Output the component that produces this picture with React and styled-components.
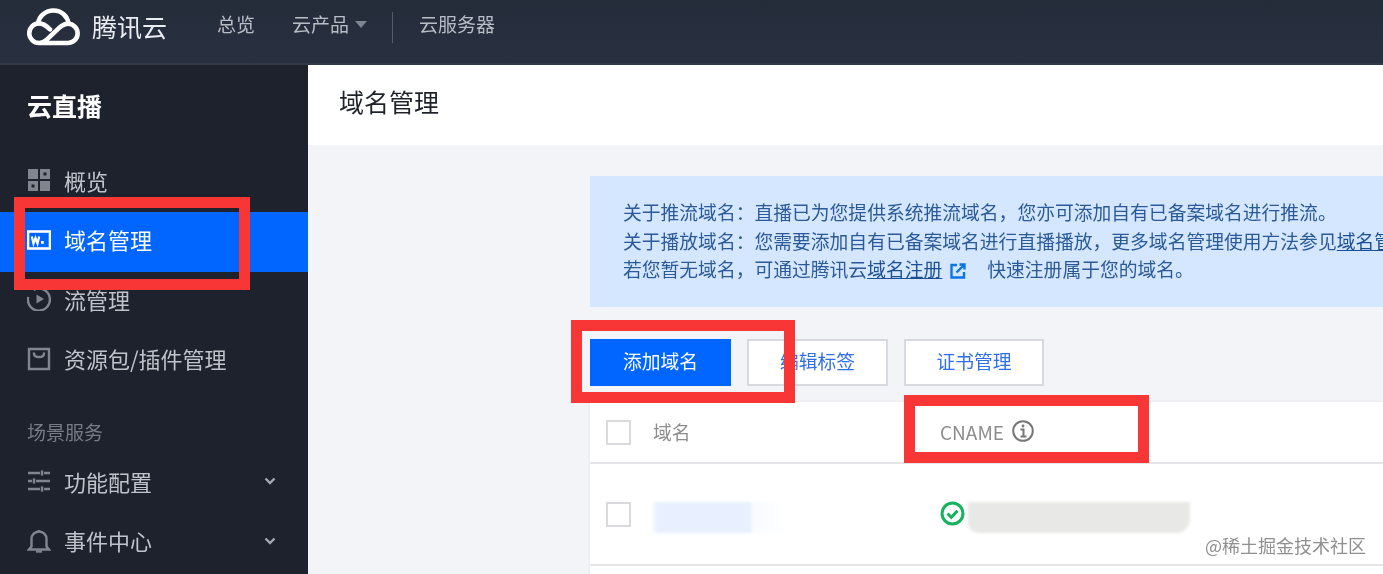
import React from 'react'
import styled, { createGlobalStyle } from 'styled-components'

const GlobalStyle = createGlobalStyle`
  html, body { margin: 0; padding: 0; background: #fff; }
  * { box-sizing: border-box; }
`

const Page = styled.div`
  position: relative;
  width: 1383px;
  height: 574px;
  overflow: hidden;
  display: flex;
  flex-direction: column;
  font-family: "Noto Sans CJK SC", "Noto Sans", sans-serif;
  background: #f2f4f8;
  filter: blur(0.45px);
`

const TopBar = styled.header`
  flex: none;
  height: 65px;
  padding: 0 0 16px 27px;
  display: flex;
  align-items: center;
  background: linear-gradient(#242b39, #293040);
  border-bottom: 2px solid #323947;
`

const Brand = styled.div`
  display: flex;
  align-items: center;
  gap: 12px;
  width: 190px;
  margin-top: 6px;
  color: #e9ecf1;
  font-size: 25px;
  line-height: 1;
`

const NavItem = styled.span`
  display: flex;
  align-items: center;
  gap: 6px;
  margin-right: ${p => p.$gap}px;
  color: #b9bec6;
  font-size: 19px;
`

const Caret = styled.i`
  width: 0;
  height: 0;
  margin-top: 2px;
  border-left: 6px solid transparent;
  border-right: 6px solid transparent;
  border-top: 7px solid #7f8590;
`

const NavDivider = styled.i`
  width: 1px;
  height: 31px;
  margin-top: 7px;
  margin-right: 26px;
  background: #565c69;
`

const Body = styled.div`
  flex: 1;
  display: flex;
  min-height: 0;
`

const Sidebar = styled.aside`
  flex: none;
  width: 308px;
  background: #1e222d;
  color: #bfc3ca;
`

const SideTitle = styled.div`
  height: 87.5px;
  padding: 0 0 7px 27px;
  display: flex;
  align-items: center;
  color: #fff;
  font-size: 25px;
  font-weight: 700;
`

const SideItem = styled.div`
  height: 59.5px;
  padding: 0 32px 4px 27px;
  display: flex;
  align-items: center;
  gap: 13px;
  font-size: 22px;
  background: ${p => (p.$active ? '#0066ff' : 'transparent')};
  color: ${p => (p.$active ? '#fff' : '#bfc3ca')};
  span { flex: 1; margin-bottom: 1px; }
`

const SideGroup = styled.div`
  height: 44.25px;
  margin-top: 18.5px;
  padding-left: 27px;
  display: flex;
  align-items: center;
  color: #767b85;
  font-size: 19px;
`

const Main = styled.main`
  flex: 1;
  min-width: 0;
`

const MainHeader = styled.div`
  height: 80px;
  padding: 0 0 8px 31px;
  display: flex;
  align-items: center;
  background: #fff;
  color: #1f2329;
  font-size: 25px;
`

const Content = styled.div`
  padding: 31px 0 0 282px;
`

const Notice = styled.div`
  height: 131px;
  padding: 22px 0 0 33px;
  background: #d5e7ff;
  color: #2a5a98;
  font-size: 18.8px;
  line-height: 28.5px;
  white-space: nowrap;
  overflow: hidden;
  a { color: #1c4f94; text-decoration: underline; }
  svg { margin: 0 21px 0 8px; vertical-align: -2px; }
`

const Toolbar = styled.div`
  margin-top: 32px;
  display: flex;
  gap: 16px;
`

const Button = styled.button`
  width: ${p => p.$width}px;
  height: 47px;
  padding: 0 0 4px;
  font: inherit;
  font-size: 18.8px;
  border: ${p => (p.$primary ? 'none' : '2px solid #d6d9df')};
  background: ${p => (p.$primary ? '#0066ff' : '#fff')};
  color: ${p => (p.$primary ? '#fff' : '#2f6fe8')};
`

const Table = styled.div`
  margin-top: 16px;
  background: #fff;
  height: 190px;
  box-shadow: 0 0 3px rgba(0, 0, 0, 0.07);
`

const Row = styled.div`
  height: ${p => p.$height}px;
  padding-left: 16px;
  display: flex;
  align-items: center;
  border-bottom: 2px solid #e3e5e9;
`

const Checkbox = styled.i`
  flex: none;
  width: 25px;
  height: 25px;
  border: 2px solid #d8dade;
  background: #fff;
`

const ColName = styled.div`
  width: 287px;
  margin-left: 22px;
  padding-bottom: 2px;
  display: flex;
  align-items: center;
  color: #8d8d8d;
  font-size: 18.8px;
`

const ColCname = styled.div`
  display: flex;
  align-items: center;
  gap: ${p => p.$gap}px;
  padding-bottom: 2px;
  color: #8d8d8d;
  font-size: 19px;
`

const Smudge = styled.i`
  display: block;
  width: ${p => p.$width}px;
  height: 31px;
  margin-top: 8px;
  background: ${p => p.$bg};
  border-radius: ${p => p.$radius || '0'};
  filter: blur(1.5px);
`

const Watermark = styled.div`
  position: absolute;
  right: 17px;
  bottom: 20px;
  color: #8f8f8f;
  font-size: 18px;
  line-height: 1;
`

const Mark = styled.div`
  position: absolute;
  left: ${p => p.$x}px;
  top: ${p => p.$y}px;
  width: ${p => p.$w}px;
  height: ${p => p.$h}px;
  border: 11px solid #f93636;
`

const Logo = () => (
  <svg width="53" height="38" viewBox="0 0 53 38" fill="none" stroke="#fff" strokeWidth="4.6" strokeLinecap="round" strokeLinejoin="round">
    <path d="M12 35h29a9.6 9.6 0 0 0 0-19.2c-5 0-8 3-12 7l-9.500 9C17.500 34 15 35 12 35a9.800 9.800 0 0 1 0-19.600c5 0 8.500 3.600 11 6" />
    <path d="M11 15.500C12 8 18.500 2.500 26.500 2.500S40.500 8 41.500 15.500" />
  </svg>
)

const iconProps = { width: 24, height: 24, viewBox: '0 0 24 24', fill: 'none', style: { flex: 'none' } }

const OverviewIcon = () => (
  <svg {...iconProps} fill="#80858e">
    <path fillRule="evenodd" d="M1 1h10v10H1zM13 1h10v10H13zM16.500 4.500v3h3v-3zM1 13h10v10H1zM4.500 16.500v3h3v-3zM13 13h10v10H13z" />
  </svg>
)

const DomainIcon = () => (
  <svg {...iconProps}>
    <rect x="1" y="3.500" width="22" height="17" stroke="#fff" strokeWidth="2.600" />
    <path d="M4.800 8.500l1.700 7 2-5.500 2 5.500 1.700-7" stroke="#fff" strokeWidth="2.200" />
    <rect x="14" y="13" width="2.800" height="2.800" fill="#fff" />
  </svg>
)

const StreamIcon = () => (
  <svg {...iconProps} stroke="#80858e">
    <path d="M6.500 3A11 11 0 1 1 1.200 10" strokeWidth="2.400" />
    <path d="M9.500 7.500l7.500 4.500-7.500 4.500z" fill="#80858e" strokeWidth="0" />
  </svg>
)

const PackageIcon = () => (
  <svg {...iconProps} stroke="#80858e" strokeWidth="2.400">
    <path d="M2 2h20v20H2z" />
    <path d="M7 5.500v1c0 2.500 2 3.500 5 3.500s5-1 5-3.500v-1" />
  </svg>
)

const ConfigIcon = () => (
  <svg {...iconProps} stroke="#80858e" strokeWidth="2.400">
    <path d="M1 4h12M17 4h6M1 12h4M9 12h14M1 20h12M17 20h6" />
    <path d="M15 1.500v5M7 9.500v5M15 17.500v5" />
  </svg>
)

const BellIcon = () => (
  <svg {...iconProps} stroke="#80858e" strokeWidth="2.400">
    <path d="M2 20.500h20l-2.500-3V10a7.500 7.500 0 0 0-15 0v7.500z" />
    <path d="M9 22.500h6" />
    <path d="M12 1v1.500" />
  </svg>
)

const Chevron = () => (
  <svg width="12" height="8" viewBox="0 0 12 8" fill="none" stroke="#a4a8b0" strokeWidth="2.400" style={{ flex: 'none' }}>
    <path d="M1.500 1.500L6 6l4.500-4.500" />
  </svg>
)

const ExternalIcon = () => (
  <svg width="16" height="16" viewBox="0 0 16 16" fill="none" stroke="#0a74e8" strokeWidth="2.400">
    <path d="M7 2H1.500v12.500H14V9" />
    <path d="M6.500 9.500L14 2M9.500 1.500h5v5" />
  </svg>
)

const InfoIcon = () => (
  <svg width="22" height="22" viewBox="0 0 22 22" fill="none">
    <circle cx="11" cy="11" r="9.800" stroke="#777" strokeWidth="2" />
    <path d="M8.500 9.500H11.500V16M8.500 16.500h6" stroke="#777" strokeWidth="2" />
    <circle cx="11" cy="6" r="1.400" fill="#777" />
  </svg>
)

const CheckIcon = () => (
  <svg width="25" height="25" viewBox="0 0 25 25" fill="none" stroke="#15b35c" strokeWidth="3" style={{ flex: 'none' }}>
    <circle cx="12.500" cy="12.500" r="10.500" />
    <path d="M7.500 12.500l3.800 3.800 6.200-6.600" />
  </svg>
)

const menu = [
  { icon: <DomainIcon />, label: '域名管理', active: true },
  { icon: <StreamIcon />, label: '流管理' },
  { icon: <PackageIcon />, label: '资源包/插件管理' },
]

export default function App() {
  return (
    <Page>
      <GlobalStyle />
      <TopBar>
        <Brand><Logo />腾讯云</Brand>
        <NavItem $gap={37}>总览</NavItem>
        <NavItem $gap={25}>云产品<Caret /></NavItem>
        <NavDivider />
        <NavItem>云服务器</NavItem>
      </TopBar>
      <Body>
        <Sidebar>
          <SideTitle>云直播</SideTitle>
          <SideItem><OverviewIcon /><span>概览</span></SideItem>
          {menu.map(m => (
            <SideItem key={m.label} $active={m.active}>{m.icon}<span>{m.label}</span></SideItem>
          ))}
          <SideGroup>场景服务</SideGroup>
          <SideItem><ConfigIcon /><span>功能配置</span><Chevron /></SideItem>
          <SideItem><BellIcon /><span>事件中心</span><Chevron /></SideItem>
        </Sidebar>
        <Main>
          <MainHeader>域名管理</MainHeader>
          <Content>
            <Notice>
              <div>关于推流域名：直播已为您提供系统推流域名，您亦可添加自有已备案域名进行推流。</div>
              <div>关于播放域名：您需要添加自有已备案域名进行直播播放，更多域名管理使用方法参见<a>域名管理</a></div>
              <div>若您暂无域名，可通过腾讯云<a>域名注册</a><ExternalIcon />快速注册属于您的域名。</div>
            </Notice>
            <Toolbar>
              <Button $primary $width={141}>添加域名</Button>
              <Button $width={141}>编辑标签</Button>
              <Button $width={140}>证书管理</Button>
            </Toolbar>
            <Table>
              <Row $height={62}>
                <Checkbox />
                <ColName>域名</ColName>
                <ColCname $gap={8}>CNAME <InfoIcon /></ColCname>
              </Row>
              <Row $height={102}>
                <Checkbox />
                <ColName><Smudge $width={132} $bg="linear-gradient(90deg, #f4f7ff, #e8effe 4% 74%, #f8faff 75%, #fff)" /></ColName>
                <ColCname $gap={3}><CheckIcon /><Smudge $width={222} $bg="#e8e8e6" $radius="0 0 14px 10px" /></ColCname>
              </Row>
            </Table>
          </Content>
        </Main>
      </Body>
      <Mark $x={14} $y={197} $w={236} $h={93} />
      <Mark $x={571} $y={320} $w={224} $h={83} />
      <Mark $x={904} $y={395} $w={245} $h={68} />
      <Watermark>@稀土掘金技术社区</Watermark>
    </Page>
  )
}
